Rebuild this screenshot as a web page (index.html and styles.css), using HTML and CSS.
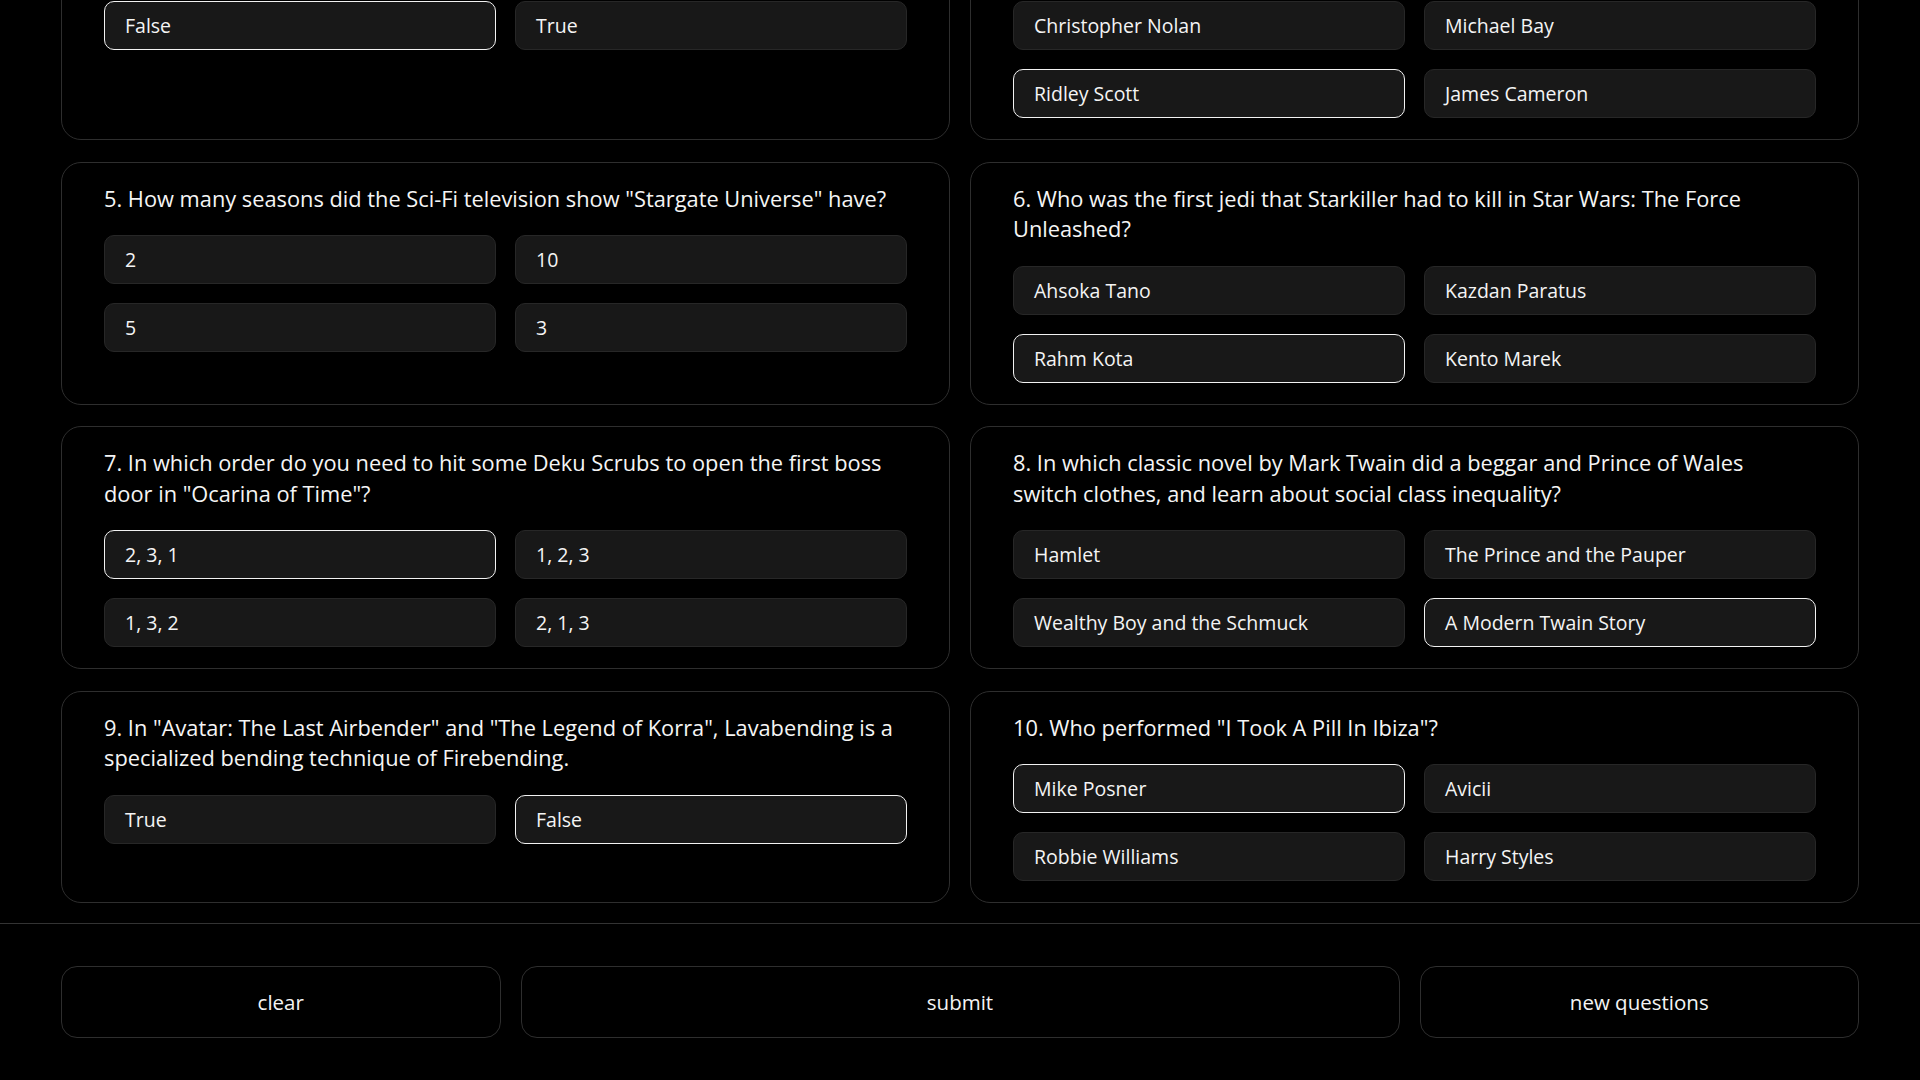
FILE: index.html
```html
<!DOCTYPE html>
<html lang="en">
<head>
<meta charset="utf-8">
<title>Quiz</title>
<link rel="stylesheet" href="styles.css">
</head>
<body>
<main class="quiz">
  <div class="grid">
    <section class="card">
      <p class="question">1. What is the capital of Australia?</p>
      <div class="options">
        <button class="option">Sydney</button>
        <button class="option selected">Canberra</button>
        <button class="option">Melbourne</button>
        <button class="option">Perth</button>
      </div>
    </section>
    <section class="card">
      <p class="question">2. Which planet is known as the Red Planet?</p>
      <div class="options">
        <button class="option selected">Mars</button>
        <button class="option">Venus</button>
        <button class="option">Jupiter</button>
        <button class="option">Mercury</button>
      </div>
    </section>
    <section class="card">
      <p class="question">3. The Great Wall of China is visible from the Moon.</p>
      <div class="options">
        <button class="option selected">False</button>
        <button class="option">True</button>
      </div>
    </section>
    <section class="card">
      <p class="question">4. Who directed the 1982 film "Blade Runner"?</p>
      <div class="options">
        <button class="option">Christopher Nolan</button>
        <button class="option">Michael Bay</button>
        <button class="option selected">Ridley Scott</button>
        <button class="option">James Cameron</button>
      </div>
    </section>
    <section class="card">
      <p class="question">5. How many seasons did the Sci-Fi television show "Stargate Universe" have?</p>
      <div class="options">
        <button class="option">2</button>
        <button class="option">10</button>
        <button class="option">5</button>
        <button class="option">3</button>
      </div>
    </section>
    <section class="card">
      <p class="question">6. Who was the first jedi that Starkiller had to kill in Star Wars: The Force Unleashed?</p>
      <div class="options">
        <button class="option">Ahsoka Tano</button>
        <button class="option">Kazdan Paratus</button>
        <button class="option selected">Rahm Kota</button>
        <button class="option">Kento Marek</button>
      </div>
    </section>
    <section class="card">
      <p class="question">7. In which order do you need to hit some Deku Scrubs to open the first boss door in "Ocarina of Time"?</p>
      <div class="options">
        <button class="option selected">2, 3, 1</button>
        <button class="option">1, 2, 3</button>
        <button class="option">1, 3, 2</button>
        <button class="option">2, 1, 3</button>
      </div>
    </section>
    <section class="card">
      <p class="question">8. In which classic novel by Mark Twain did a beggar and Prince of Wales switch clothes, and learn about social class inequality?</p>
      <div class="options">
        <button class="option">Hamlet</button>
        <button class="option">The Prince and the Pauper</button>
        <button class="option">Wealthy Boy and the Schmuck</button>
        <button class="option selected">A Modern Twain Story</button>
      </div>
    </section>
    <section class="card">
      <p class="question">9. In "Avatar: The Last Airbender" and "The Legend of Korra", Lavabending is a specialized bending technique of Firebending.</p>
      <div class="options">
        <button class="option">True</button>
        <button class="option selected">False</button>
      </div>
    </section>
    <section class="card">
      <p class="question">10. Who performed "I Took A Pill In Ibiza"?</p>
      <div class="options">
        <button class="option selected">Mike Posner</button>
        <button class="option">Avicii</button>
        <button class="option">Robbie Williams</button>
        <button class="option">Harry Styles</button>
      </div>
    </section>
  </div>
</main>
<footer class="actions">
  <button class="action">clear</button>
  <button class="action">submit</button>
  <button class="action">new questions</button>
</footer>
</body>
</html>
```
FILE: styles.css
```css
* {
  box-sizing: border-box;
}

html, body {
  margin: 0;
  height: 100%;
}

body {
  background: #000;
  color: #f4f4f4;
  font-family: "Open Sans", "Noto Sans", sans-serif;
  display: flex;
  flex-direction: column;
  overflow: hidden;
}

.quiz {
  flex: 1 1 auto;
  min-height: 0;
  overflow: hidden;
  display: flex;
  flex-direction: column;
  justify-content: flex-end;
  padding: 0 61px 20px;
}

.grid {
  display: grid;
  grid-template-columns: 1fr 1fr;
  column-gap: 20px;
  row-gap: 21.5px;
}

.card {
  border: 1px solid #2e2e2e;
  border-radius: 20px;
  padding: 21px 42px;
}

.question {
  margin: 0 0 21px;
  padding-right: 10px;
  font-size: 21.8px;
  line-height: 30.5px;
  color: #f5f5f5;
}

.options {
  display: grid;
  grid-template-columns: 1fr 1fr;
  gap: 19px;
}

.option {
  display: block;
  text-align: left;
  font-family: inherit;
  font-size: 19.5px;
  line-height: 23px;
  padding: 12px 20px;
  color: #f4f4f4;
  background: #181818;
  border: 1px solid #272727;
  border-radius: 10px;
}

.option.selected {
  border-color: #f2f2f2;
}

.actions {
  flex: 0 0 auto;
  border-top: 1px solid #333;
  padding: 42px 61px;
  display: grid;
  grid-template-columns: 1fr 2fr 1fr;
  gap: 20px;
}

.action {
  font-family: inherit;
  font-size: 20.5px;
  line-height: 28px;
  padding: 21px 10px;
  color: #f4f4f4;
  background: #000;
  border: 1px solid #2e2e2e;
  border-radius: 16px;
}
```
